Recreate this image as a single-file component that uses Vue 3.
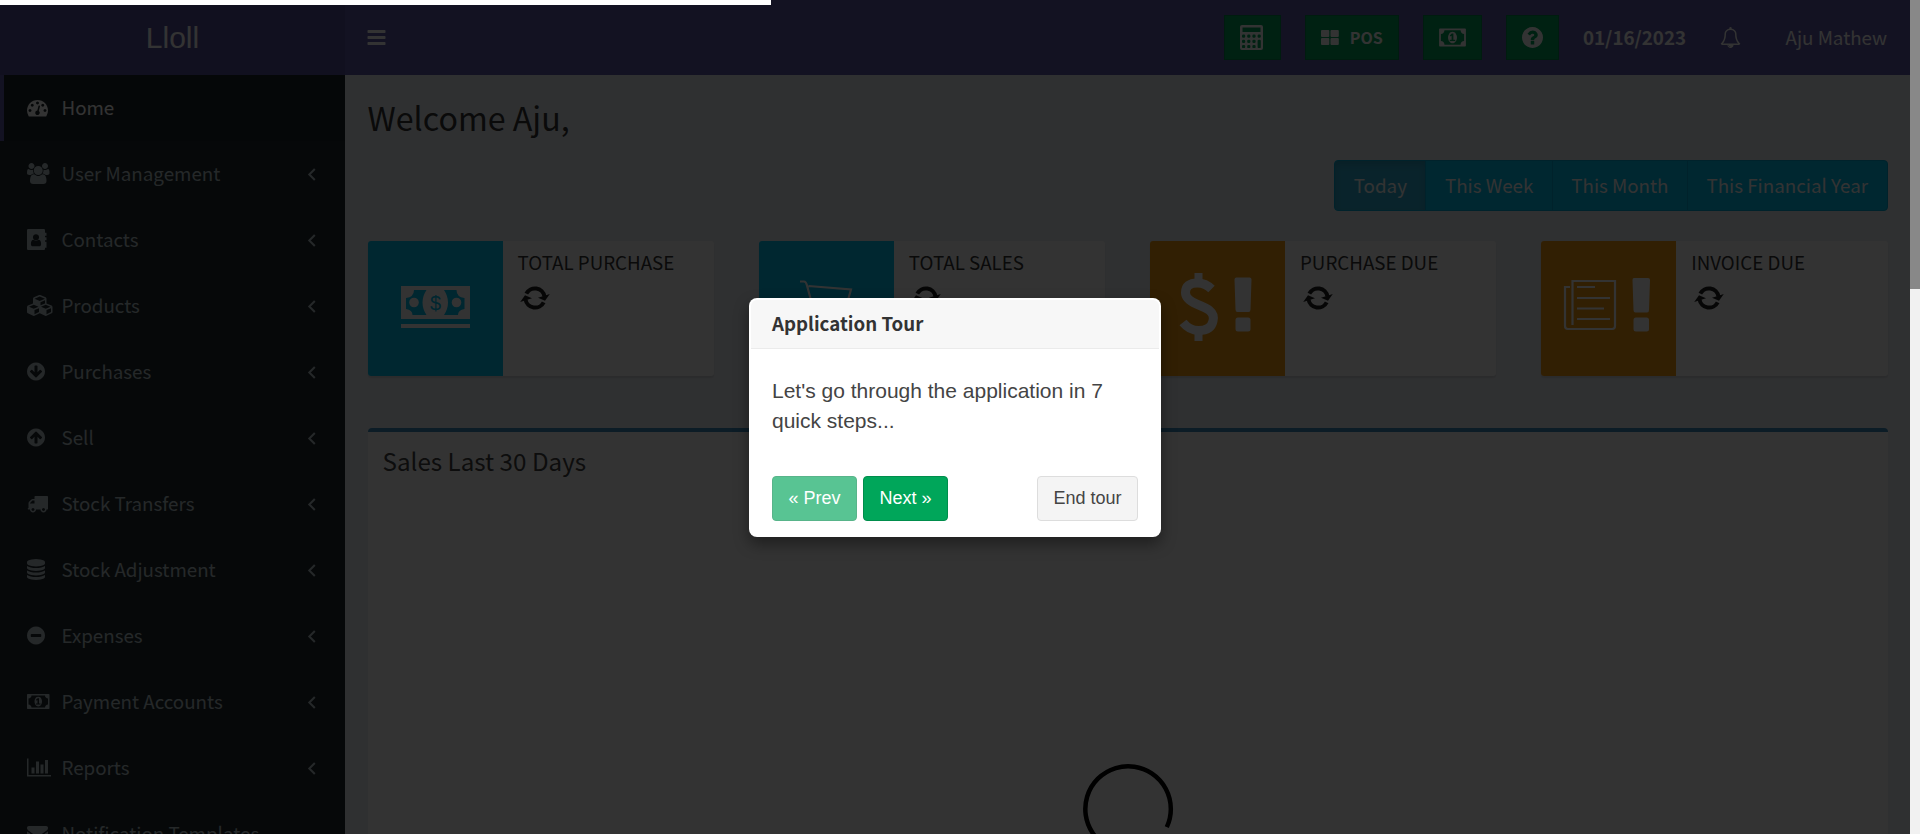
<script setup>
const disc = 'q0 209-103 385.5t-279.5 279.5-385.5 103-385.5-103-279.5-279.5-103-385.5 103-385.5 279.5-279.5 385.5-103 385.5 103 279.5 279.5 103 385.5z'
const circle = 'M1664 896' + disc
const arrowDown = 'M1412 897q0-27-18-45l-91-91q-18-18-45-18t-45 18l-189 189v-502q0-26-19-45t-45-19h-128q-26 0-45 19t-19 45v502l-189-189q-19-19-45-19t-45 19l-91 91q-18 18-18 45t18 45l362 362 91 91q18 18 45 18t45-18l91-91 362-362q18-18 18-45z'
const money = 'M768 1152h384v-96h-128v-448h-114l-148 137 77 80q42-37 55-57h2v288h-128v96zm512-256q0 70-21 142t-59.5 134-101.5 101-138 39-138-39-101.5-101-59.5-134-21-142 21-142 59.5-134 101.5-101 138-39 138 39 101.5 101 59.5 134 21 142zm512 256v-512q-106 0-181-75t-75-181h-1152q0 106-75 181t-181 75v512q106 0 181 75t75 181h1152q0-106 75-181t181-75zm128-832v1152q0 26-19 45t-45 19h-1792q-26 0-45-19t-19-45v-1152q0-26 19-45t45-19h1792q26 0 45 19t19 45z'
const question = 'M1024 1376v-192q0-14-9-23t-23-9h-192q-14 0-23 9t-9 23v192q0 14 9 23t23 9h192q14 0 23-9t9-23zm256-672q0-88-55.5-163t-138.5-116-170-41q-243 0-371 213-15 24 8 42l132 100q7 6 19 6 16 0 25-12 53-68 86-92 34-24 86-24 48 0 85.5 26t37.5 59q0 38-20 61t-68 45q-63 28-115.5 86.5t-52.5 125.5v36q0 14 9 23t23 9h192q14 0 23-9t9-23q0-19 21.5-49.5t54.5-49.5q32-18 49-28.5t46-35 44.5-48 28-60.5 12.5-81z' + circle
const bell = 'M912 1696q0-16-16-16-59 0-101.5-42.5t-42.5-101.5q0-16-16-16t-16 16q0 73 51.5 124.5t124.5 51.5q16 0 16-16zm-666-288h1300q-266-300-266-832 0-51-24-105t-69-103-121.5-80.5-169.5-31.5-169.5 31.5-121.5 80.5-69 103-24 105q0 532-266 832zm1482 0q0 52-38 90t-90 38h-448q0 106-75 181t-181 75-181-75-75-181h-448q-52 0-90-38t-38-90q50-42 91-88t85-119.5 74.5-158.5 50-206 19.5-260q0-152 117-282.5t307-158.5q-8-19-8-39 0-40 28-68t68-28 68 28 28 68q0 20-8 39 190 28 307 158.5t117 282.5q0 139 19.5 260t50 206 74.5 158.5 85 119.5 91 88z'

// Sidebar icons share a 1792-unit em; w is the glyph width and x its left edge.
const menu = [
  { label: 'Home', active: true, x: 0, w: 1792, d: 'M384 1152q0-53-37.5-90.5t-90.5-37.5-90.5 37.5-37.5 90.5 37.5 90.5 90.5 37.5 90.5-37.5 37.5-90.5zm192-448q0-53-37.5-90.5t-90.5-37.5-90.5 37.5-37.5 90.5 37.5 90.5 90.5 37.5 90.5-37.5 37.5-90.5zm428 481l101-382q6-26-7.5-48.5t-38.5-29.5-48 6.5-30 39.5l-101 382q-60 5-107 43.5t-63 98.5q-20 77 20 146t117 89 146-20 89-117q16-60-6-117t-72-91zm660-33q0-53-37.5-90.5t-90.5-37.5-90.5 37.5-37.5 90.5 37.5 90.5 90.5 37.5 90.5-37.5 37.5-90.5zm-640-640q0-53-37.5-90.5t-90.5-37.5-90.5 37.5-37.5 90.5 37.5 90.5 90.5 37.5 90.5-37.5 37.5-90.5zm448 192q0-53-37.5-90.5t-90.5-37.5-90.5 37.5-37.5 90.5 37.5 90.5 90.5 37.5 90.5-37.5 37.5-90.5zm320 448q0 261-141 483-19 29-54 29h-1402q-35 0-54-29-141-221-141-483 0-182 71-348t191-286 286-191 348-71 348 71 286 191 191 286 71 348z' },
  { label: 'User Management', x: 0, w: 1920, d: 'M593 896q-162 5-265 128h-134q-82 0-138-40.5t-56-118.5q0-353 124-353 6 0 43.5 21t97.5 42.5 119 21.5q67 0 133-23-5 37-5 66 0 139 81 256zm1071 637q0 120-73 189.5t-194 69.5h-874q-121 0-194-69.5t-73-189.5q0-53 3.5-103.5t14-109 26.5-108.5 43-97.5 62-81 85.5-53.5 111.5-20q10 0 43 21.5t73 48 107 48 135 21.5 135-21.5 107-48 73-48 43-21.5q61 0 111.5 20t85.5 53.5 62 81 43 97.5 26.5 108.5 14 109 3.5 103.5zm-1024-1277q0 106-75 181t-181 75-181-75-75-181 75-181 181-75 181 75 75 181zm704 384q0 159-112.5 271.5t-271.5 112.5-271.5-112.5-112.5-271.5 112.5-271.5 271.5-112.5 271.5 112.5 112.5 271.5zm576 225q0 78-56 118.5t-138 40.5h-134q-103-123-265-128 81-117 81-256 0-29-5-66 66 23 133 23 59 0 119-21.5t97.5-42.5 43.5-21q124 0 124 353zm-128-609q0 106-75 181t-181 75-181-75-75-181 75-181 181-75 181 75 75 181z' },
  { label: 'Contacts', x: 0, w: 1664, d: 'M1201 1298q0-57-5.5-107t-21-100.5-39.5-86-64-58-91-22.5q-6 4-33.5 20.5t-42.5 24.5-40.5 20-49 17-46.5 5-46.5-5-49-17-40.5-20-42.5-24.5-33.5-20.5q-51 0-91 22.5t-64 58-39.5 86-21 100.5-5.5 107q0 73 42 121.5t103 48.5h576q61 0 103-48.5t42-121.5zm-173-594q0-108-76.5-184t-183.5-76-183.5 76-76.5 184q0 107 76.5 183.5t183.5 76.5 183.5-76.5 76.5-183.5zm636 672v192q0 14-9 23t-23 9h-96v96q0 96-96 96h-1344q-96 0-96-96v-1600q0-96 96-96h1344q96 0 96 96v224h96q14 0 23 9t9 23v192q0 14-9 23t-23 9h-96v128h96q14 0 23 9t9 23v192q0 14-9 23t-23 9h-96v128h96q14 0 23 9t9 23z' },
  { label: 'Products', x: 0, w: 2304, d: 'M640 1632l384-192v-314l-384 164v342zm-64-454l404-173-404-173-404 173zm1088 454l384-192v-314l-384 164v342zm-64-454l404-173-404-173-404 173zm-448-293l384-165v-266l-384 164v267zm-64-379l441-189-441-189-441 189zm1088 518v416q0 36-19 67t-52 47l-448 224q-25 14-57 14t-57-14l-448-224q-5-2-7-4-2 2-7 4l-448 224q-25 14-57 14t-57-14l-448-224q-33-16-52-47t-19-67v-416q0-38 21.5-70t56.5-48l434-186v-400q0-38 21.5-70t56.5-48l448-192q23-10 50-10t50 10l448 192q35 16 56.5 48t21.5 70v400l434 186q36 16 57 48t21 70z' },
  { label: 'Purchases', x: 128, w: 1536, d: arrowDown + circle },
  { label: 'Sell', x: 128, w: 1536, d: arrowDown + circle, flip: true },
  { label: 'Stock Transfers', x: 0, w: 1792, d: 'M640 1408q0-52-38-90t-90-38-90 38-38 90 38 90 90 38 90-38 38-90zm-384-512h384v-256h-158q-13 0-22 9l-195 195q-9 9-9 22v30zm1280 512q0-52-38-90t-90-38-90 38-38 90 38 90 90 38 90-38 38-90zm256-1088v1024q0 15-4 26.5t-13.5 18.5-16.5 11.5-23.5 6-22.5 2-25.5 0-22.5-.5q0 106-75 181t-181 75-181-75-75-181h-384q0 106-75 181t-181 75-181-75-75-181h-64q-3 0-22.5.5t-25.5 0-22.5-2-23.5-6-16.5-11.5-13.5-18.5-4-26.5q0-26 19-45t45-19v-320q0-8-.5-35t0-38 2.5-34.5 6.5-37 14-30.5 22.5-30l198-198q19-19 50.5-32t58.5-13h160v-192q0-26 19-45t45-19h1024q26 0 45 19t19 45z' },
  { label: 'Stock Adjustment', x: 128, w: 1536, d: 'M896 768q237 0 443-43t325-127v170q0 69-103 128t-280 93.5-385 34.5-385-34.5-280-93.5-103-128v-170q119 84 325 127t443 43zm0 768q237 0 443-43t325-127v170q0 69-103 128t-280 93.5-385 34.5-385-34.5-280-93.5-103-128v-170q119 84 325 127t443 43zm0-384q237 0 443-43t325-127v170q0 69-103 128t-280 93.5-385 34.5-385-34.5-280-93.5-103-128v-170q119 84 325 127t443 43zm0-1152q208 0 385 34.5t280 93.5 103 128v128q0 69-103 128t-280 93.5-385 34.5-385-34.5-280-93.5-103-128v-128q0-69 103-128t280-93.5 385-34.5z' },
  { label: 'Expenses', x: 128, w: 1536, d: 'M1344 960v-128q0-26-19-45t-45-19h-768q-26 0-45 19t-19 45v128q0 26 19 45t45 19h768q26 0 45-19t19-45z' + circle },
  { label: 'Payment Accounts', x: 0, w: 1920, d: money },
  { label: 'Reports', x: 0, w: 2048, d: 'M640 896v512h-256v-512h256zm384-512v1024h-256v-1024h256zm1024 1152v128h-2048v-1536h128v1408h1920zm-640-896v768h-256v-768h256zm384-384v1152h-256v-1152h256z' },
  { label: 'Notification Templates', leaf: true, x: 0, w: 1792, d: 'M1792 710v794q0 160-160 160h-1472q-160 0-160-160v-794q44 49 101 87 362 246 497 345 57 42 92.500 65.500t94.500 48 110 24.500h2q51 0 110-24.500t94.500-48 92.500-65.500q170-123 498-345 57-39 100-87zm0-294q0 79-49 151t-122 123q-376 261-468 325-10 7-42.500 30.500t-54 38-52 32.500-57.500 27-50 9h-2q-23 0-50-9t-57.500-27-52-32.500-54-38-42.500-30.500q-91-64-262-182.500t-205-142.500q-62-42-117-115.500t-55-136.500q0-78 41.500-130t118.500-52h1472q65 0 112.500 47t47.500 113z' },
]

const ranges = ['Today', 'This Week', 'This Month', 'This Financial Year']
const stats = [
  { title: 'TOTAL PURCHASE', tone: 'aqua', icon: 'cash' },
  { title: 'TOTAL SALES', tone: 'aqua', icon: 'cart' },
  { title: 'PURCHASE DUE', tone: 'amber', icon: 'dollar' },
  { title: 'INVOICE DUE', tone: 'amber', icon: 'paper' },
]
const keys = [0, 1, 2, 3].flatMap(c => [0, 1, 2].map(r => ({ c, r })))
  .filter(k => !(k.c === 3 && k.r === 2))
</script>

<template>
  <div class="app">
    <header class="topbar">
      <div class="logo">Lloll</div>
      <div class="nav">
        <svg class="bars" viewBox="128 256 1536 1280"><path d="M1664 1344v128q0 26-19 45t-45 19h-1408q-26 0-45-19t-19-45v-128q0-26 19-45t45-19h1408q26 0 45 19t19 45zm0-512v128q0 26-19 45t-45 19h-1408q-26 0-45-19t-19-45v-128q0-26 19-45t45-19h1408q26 0 45 19t19 45zm0-512v128q0 26-19 45t-45 19h-1408q-26 0-45-19t-19-45v-128q0-26 19-45t45-19h1408q26 0 45 19t19 45z" /></svg>
        <div class="tools">
          <span class="tool calc">
            <svg width="23" height="25" viewBox="0 0 23 25">
              <path fill-rule="evenodd" d="M2 0h19q2 0 2 2v21q0 2-2 2h-19q-2 0-2-2v-21q0-2 2-2zM2.500 2.500v4.500h18v-4.500z" />
              <g class="keys">
                <rect v-for="(k, i) in keys" :key="i" :x="2 + k.c * 5.200" :y="9.500 + k.r * 5.200" width="3.200" :height="k.c === 3 && k.r === 1 ? 8.400 : 3.200" rx="1.200" />
              </g>
            </svg>
          </span>
          <span class="tool pos">
            <svg width="18" height="15" viewBox="0 0 18 15"><rect width="8.300" height="7" rx="1" /><rect x="9.500" width="8.300" height="7" rx="1" /><rect y="8" width="8.300" height="7" rx="1" /><rect x="9.500" y="8" width="8.300" height="7" rx="1" /></svg>
            <b>POS</b>
          </span>
          <span class="tool cash"><svg width="27" height="25" viewBox="0 0 1920 1792"><path :d="money" /></svg></span>
          <span class="tool help"><svg width="21" height="25" viewBox="128 0 1536 1792"><path fill-rule="evenodd" :d="question" /></svg></span>
        </div>
        <b class="date">01/16/2023</b>
        <svg class="bell" width="21" height="21" viewBox="0 0 1792 1792"><path :d="bell" /></svg>
        <span class="user">Aju Mathew</span>
      </div>
    </header>

    <div class="body">
      <aside class="sidebar">
        <div v-for="m in menu" :key="m.label" class="item" :class="{ active: m.active }">
          <span class="ico">
            <svg :class="{ flip: m.flip }" height="21" :width="m.w * 21 / 1792" :viewBox="`${m.x} 0 ${m.w} 1792`"><path fill-rule="evenodd" :d="m.d" /></svg>
          </span>
          <span class="label">{{ m.label }}</span>
          <svg v-if="!m.active && !m.leaf" class="chev" width="8" height="13" viewBox="0 0 8 13"><path d="M6.800 1L1.300 6.500 6.800 12" /></svg>
        </div>
      </aside>

      <main class="content">
        <h1>Welcome Aju,</h1>
        <div class="ranges">
          <span v-for="(r, i) in ranges" :key="r" :class="{ on: i === 0 }">{{ r }}</span>
        </div>

        <div class="stats">
          <section v-for="s in stats" :key="s.title" class="stat">
            <div class="badge" :class="[s.tone, s.icon + '-badge']">
              <svg v-if="s.icon === 'cash'" width="69" height="42" viewBox="0 0 69 42">
                <path fill-rule="evenodd" d="M0 0h69v33H0zM13 4h12.500q-4 6-4 12.500T25.500 29H11.500q0-5-6.500-6v-11q8-1 8-8zM43 4h12.500q0 7 8 8v11q-6.500 1-6.500 6H43q4-6 4-12.500T43 4z" />
                <circle cx="13" cy="16.500" r="4.800" /><circle cx="55.500" cy="16.500" r="4.800" />
                <rect y="38" width="69" height="4" />
                <text class="sign" x="34.500" y="23.500">$</text>
              </svg>
              <svg v-else-if="s.icon === 'cart'" class="line" width="54" height="52" viewBox="0 0 54 52">
                <path d="M1 1.500h4q2 0 3 4l8 29.500h28M9.500 6l42.500 3.500-5 17.500-32 2" /><circle cx="21" cy="44" r="4" /><circle cx="42" cy="44" r="4" />
              </svg>
              <svg v-else-if="s.icon === 'dollar'" width="74" height="70" viewBox="0 0 74 70">
                <path class="thick" d="M32.500 17q-6-6-14-6-12 0-12 9.500 0 7 11 11.500t13 6.500q5 4 3.500 10.500-2 9.500-14.500 9.500-9 0-15.500-8" />
                <path d="M15.500 1h8v9h-8zM15.500 60h8v9h-8z" />
                <path d="M57.500 5.500h13q2 0 2 2l-1 30q0 2.500-2 2.500h-11q-2 0-2-2.500l-1-30q0-2 2-2z" /><rect x="56.500" y="45.500" width="15" height="14" rx="2.500" />
              </svg>
              <svg v-else width="86" height="55" viewBox="0 0 86 55">
                <path class="stroke" d="M8.500 46V2h42.500v45q0 3-3 3H4q-3 0-3-3V8h5M13 8h18M13 19h33M13 29.500h27M13 40h33" />
                <path d="M70 -1h14q2 0 2 2l-1 30q0 2.500-2 2.500H71.500q-2 0-2-2.500l-1-30q0-2 1.500-2z" /><rect x="69.500" y="38.500" width="15.500" height="14" rx="2.500" />
              </svg>
            </div>
            <div class="info">
              <span>{{ s.title }}</span>
              <svg class="sync" width="30" height="24" viewBox="0 0 30 24">
                <g><path class="arc" d="M6.300 7.700A9.700 9.700 0 0 1 24.500 10.500" /><path d="M18 11.800L29.800 8 25 14.800z" /></g>
                <g transform="rotate(180 15 12)"><path class="arc" d="M6.300 7.700A9.700 9.700 0 0 1 24.500 10.500" /><path d="M18 11.800L29.800 8 25 14.800z" /></g>
              </svg>
            </div>
          </section>
        </div>

        <section class="chart">
          <h3>Sales Last 30 Days</h3>
          <svg class="spinner" width="90" height="90" viewBox="0 0 90 90"><path d="M83.800 63.100A42.750 42.750 0 1 0 63 83.800" /></svg>
        </section>
      </main>
    </div>

    <div class="shade"></div>
    <div class="scroll"><i></i></div>
    <div class="progress"></div>

    <div class="tour">
      <h4>Application Tour</h4>
      <p>Let's go through the application in 7 quick steps...</p>
      <div class="actions">
        <button class="go off">« Prev</button>
        <button class="go">Next »</button>
        <button class="end">End tour</button>
      </div>
    </div>
  </div>
</template>

<style>
body { margin: 0; overflow: hidden; }
</style>

<style scoped>
* { box-sizing: border-box; }
.app { position: relative; width: 1920px; height: 834px; overflow: hidden; background: #ecf0f5; font-family: "Noto Sans CJK JP", "Source Sans Pro", sans-serif; font-size: 18.750px; line-height: 30px; color: #333; }
svg { display: block; fill: currentColor; flex: none; overflow: visible; }
.topbar { display: flex; width: 1910px; height: 75px; background: #605ca8; color: #fff; }
.logo { width: 345px; background: #555299; font: 30px/75px "Liberation Sans", Arial, sans-serif; text-align: center; }
.nav { flex: 1; display: flex; align-items: center; padding: 0 22.500px 0 22px; }
.bars { width: 19px; height: 15px; }
.tools { display: flex; gap: 24px; margin-left: auto; }
.tool { height: 45px; display: flex; align-items: center; justify-content: center; gap: 10px; background: #00a65a; border: 1px solid #008d4c; }
.tool svg { margin-right: 1px; }
.calc { width: 57px; }
.keys { fill: #00a65a; }
.pos { width: 94.500px; font-size: 16px; padding-bottom: 1px; }
.cash { width: 59px; }
.help { width: 53px; }
.date { margin-left: 24px; width: 103px; height: 32px; white-space: nowrap; }
.bell { margin-left: 33.500px; }
.user { margin-left: 45px; width: 102px; height: 32px; white-space: nowrap; }
.body { display: flex; width: 1910px; height: 759px; }
.sidebar { width: 345px; background: #20292e; color: #b8c7ce; }
.item { height: 66px; display: flex; align-items: center; padding: 0 29px 2px 22.500px; border-left: 4.500px solid transparent; }
.item.active { background: #1d2529; border-color: #605ca8; color: #fff; }
.ico { width: 35px; }
.label { flex: 1; white-space: nowrap; }
.flip { transform: rotate(180deg); }
.chev { fill: none; stroke: currentColor; stroke-width: 2; margin-top: 2px; }
.content { flex: 1; padding: 0 22.500px; }
h1 { margin: 20px 0 0; font-size: 32.200px; line-height: 44px; font-weight: 400; }
.ranges { display: flex; width: max-content; height: 51px; margin: 21px 0 0 auto; background: #00c0ef; border: 1px solid #00acd6; border-radius: 4px; overflow: hidden; color: #fff; }
.ranges span { padding: 0 18.500px; line-height: 47px; border-right: 1px solid #00acd6; }
.ranges span:last-child { border: 0; }
.ranges .on { background: #31b0d5; box-shadow: inset 0 4px 7px rgba(0, 0, 0, .125); }
.stats { display: grid; grid-template-columns: repeat(4, 1fr); gap: 45px; margin-top: 30px; }
.stat { display: flex; height: 135px; background: #fff; border-radius: 3px; box-shadow: 0 1.500px 1.500px rgba(0, 0, 0, .1); overflow: hidden; }
.badge { width: 135px; display: flex; align-items: center; justify-content: center; padding-bottom: 4px; color: #fff; }
.cart-badge { padding-bottom: 6px; }
.dollar-badge { padding: 0 3px 3px 0; }
.paper-badge { padding-right: 3px; }
.aqua { background: #00c0ef; }
.amber { background: #f39c12; }
.sign { font: 20px "Liberation Sans", Arial, sans-serif; text-anchor: middle; fill: #00c0ef; }
.line, .stroke { fill: none; stroke: #fff; stroke-width: 2.200; }
.thick { fill: none; stroke: #fff; stroke-width: 9; }
.info { padding: 6px 15px; }
.sync { margin: 8.500px 0 0 2.500px; color: #222; }
.arc { fill: none; stroke: #222; stroke-width: 4; }
.chart { position: relative; height: 600px; margin-top: 52px; background: #fff; border-top: 4.500px solid #3c8dbc; border-radius: 4px; }
h3 { margin: 0; padding: 12px 15px; font-size: 24.200px; line-height: 33px; font-weight: 400; color: #444; }
.spinner { position: absolute; left: 715px; top: 332px; fill: none; stroke: #000; stroke-width: 4.500; }
.shade { position: absolute; inset: 0; background: rgba(0, 0, 0, .8); }
.scroll { position: absolute; right: 0; top: 0; width: 10px; height: 834px; background: #f1f1f1; }
.scroll i { display: block; height: 289px; background: #888; }
.progress { position: absolute; left: 0; top: 0; width: 771px; height: 5px; background: #fff; }
.tour { position: absolute; left: 749px; top: 298px; width: 412px; height: 239px; padding: 2px; background: #fff; border-radius: 8px; box-shadow: 0 7px 15px rgba(0, 0, 0, .4); }
.tour h4 { margin: 0; height: 49px; padding: 0 21px; font-size: 18.700px; line-height: 46px; background: #f7f7f7; border-bottom: 1px solid #ebebeb; border-radius: 6px 6px 0 0; }
.tour p { margin: 0; padding: 27px 21px 0; font: 21px/30px "Liberation Sans", Arial, sans-serif; color: #444; }
.actions { display: flex; gap: 6px; padding: 40px 21px 0; }
button { height: 45px; padding: 0; font: 18px "Liberation Sans", Arial, sans-serif; border-radius: 4px; }
.go { width: 85px; color: #fff; background: #00a65a; border: 1px solid #008d4c; }
.off { opacity: .65; }
.end { width: 101px; margin-left: auto; color: #444; background: #f4f4f4; border: 1px solid #ddd; }
</style>
